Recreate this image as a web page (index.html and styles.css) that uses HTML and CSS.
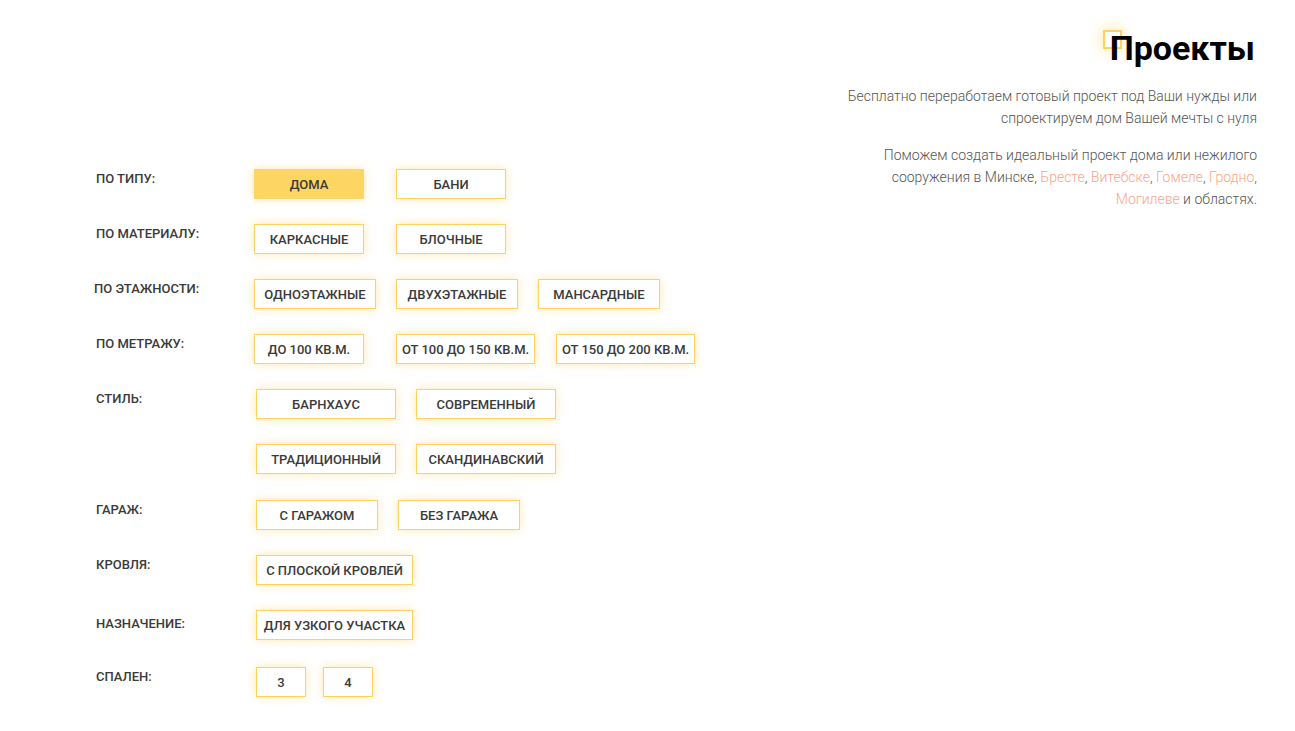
FILE: index.html
```html
<!DOCTYPE html>
<html>
  <head>
    <title>Проекты</title>
    <meta charset="UTF-8" />
    <link rel="stylesheet" href="styles.css">
  </head>

  <body>
    <div class="page">
      <section class="filters">
        <div class="filter filter--narrow">
          <span class="filter-label">По типу:</span>
          <div class="options options--wide">
            <button class="opt opt--active">Дома</button>
            <button class="opt">Бани</button>
          </div>
        </div>
        <div class="filter filter--narrow">
          <span class="filter-label">По материалу:</span>
          <div class="options options--wide">
            <button class="opt">Каркасные</button>
            <button class="opt">Блочные</button>
          </div>
        </div>
        <div class="filter filter--narrow">
          <span class="filter-label filter-label--left">По этажности:</span>
          <div class="options">
            <button class="opt opt--m">Одноэтажные</button>
            <button class="opt opt--m">Двухэтажные</button>
            <button class="opt opt--m">Мансардные</button>
          </div>
        </div>
        <div class="filter filter--narrow">
          <span class="filter-label">По метражу:</span>
          <div class="options options--area">
            <button class="opt opt--first">До 100 кв.м.</button>
            <button class="opt opt--area">От 100 до 150 кв.м.</button>
            <button class="opt opt--area">От 150 до 200 кв.м.</button>
          </div>
        </div>
        <div class="filter filter--style">
          <span class="filter-label">Стиль:</span>
          <div class="options options--style">
            <button class="opt opt--l">Барнхаус</button>
            <button class="opt opt--l">Современный</button>
            <button class="opt opt--l">Традиционный</button>
            <button class="opt opt--l">Скандинавский</button>
          </div>
        </div>
        <div class="filter">
          <span class="filter-label">Гараж:</span>
          <div class="options">
            <button class="opt opt--m">С гаражом</button>
            <button class="opt opt--m">Без гаража</button>
          </div>
        </div>
        <div class="filter">
          <span class="filter-label">Кровля:</span>
          <div class="options">
            <button class="opt opt--xl">С плоской кровлей</button>
          </div>
        </div>
        <div class="filter">
          <span class="filter-label filter-label--low">Назначение:</span>
          <div class="options">
            <button class="opt opt--xl">Для узкого участка</button>
          </div>
        </div>
        <div class="filter filter--last">
          <span class="filter-label">Спален:</span>
          <div class="options options--small">
            <button class="opt opt--s">3</button>
            <button class="opt opt--s">4</button>
          </div>
        </div>
      </section>

      <section class="intro">
        <h1 class="title"><span class="title-mark"></span>Проекты</h1>
        <p class="intro-text">Бесплатно переработаем готовый проект под Ваши нужды или<br>спроектируем дом Вашей мечты с нуля</p>
        <p class="intro-text">Поможем создать идеальный проект дома или нежилого<br>сооружения в Минске, <a href="#">Бресте</a>, <a href="#">Витебске</a>, <a href="#">Гомеле</a>, <a href="#">Гродно</a>,<br><a href="#">Могилеве</a> и областях.</p>
      </section>
    </div>
  </body>
</html>
```

FILE: styles.css
```css
* {
  box-sizing: border-box;
  margin: 0;
  padding: 0;
}

body {
  background: #fff;
  font-family: "Roboto", "Liberation Sans", sans-serif;
  color: #333;
}

.page {
  display: flex;
  justify-content: space-between;
  align-items: flex-start;
  width: 100%;
  min-height: 731px;
}

/* filters */

.filters {
  padding: 169px 0 0 96px;
}

.filter {
  display: flex;
  align-items: flex-start;
  margin-bottom: 25px;
}

.filter--style {
  margin-bottom: 26px;
}

.filter--last {
  padding-top: 2px;
}

.filter-label {
  width: 160px;
  flex-shrink: 0;
  font-size: 13px;
  font-weight: 500;
  line-height: 20px;
  text-transform: uppercase;
  color: #3a3a3a;
}

.filter--narrow .filter-label {
  width: 158px;
}

.filter-label--left {
  margin-left: -2px;
  width: 160px !important;
}

.filter-label--low {
  padding-top: 4px;
}

.options {
  display: flex;
  flex-wrap: wrap;
  column-gap: 20px;
  row-gap: 25px;
}

.options--wide {
  column-gap: 32px;
}

.options--area {
  column-gap: 21px;
}

.options--style {
  width: 300px;
}

.options--small {
  column-gap: 17px;
}

.opt {
  width: 110px;
  height: 30px;
  background: #fff;
  border: 1px solid #fdd262;
  box-shadow: 0 0 10px rgba(253, 205, 80, 0.45);
  font-family: "Roboto", "Liberation Sans", sans-serif;
  font-size: 13px;
  font-weight: 500;
  text-transform: uppercase;
  color: #3a3a3a;
  cursor: pointer;
  outline: none;
}

.opt--active {
  background: #fdd563;
  border-color: #fdd563;
}

.opt--first {
  margin-right: 11px;
}

.opt--m {
  width: 122px;
}

.opt--area {
  width: 139px;
}

.opt--l {
  width: 140px;
}

.opt--xl {
  width: 157px;
}

.opt--s {
  width: 50px;
}

/* intro */

.intro {
  padding: 28px 38px 0 0;
  text-align: right;
}

.title {
  position: relative;
  display: inline-block;
  margin-right: 2px;
  margin-bottom: 17px;
  font-size: 34px;
  font-weight: 700;
  line-height: 40px;
  color: #000;
}

.title-mark {
  position: absolute;
  left: -7px;
  top: 2px;
  width: 19px;
  height: 19px;
  border: 2px solid #fdd262;
  box-shadow: 0 0 16px rgba(253, 205, 80, 0.6);
  z-index: -1;
}

.intro-text {
  font-size: 14px;
  font-weight: 300;
  line-height: 22px;
  color: #555;
  margin-bottom: 15px;
}

.intro-text a {
  color: #fba58a;
  text-decoration: none;
}
```
